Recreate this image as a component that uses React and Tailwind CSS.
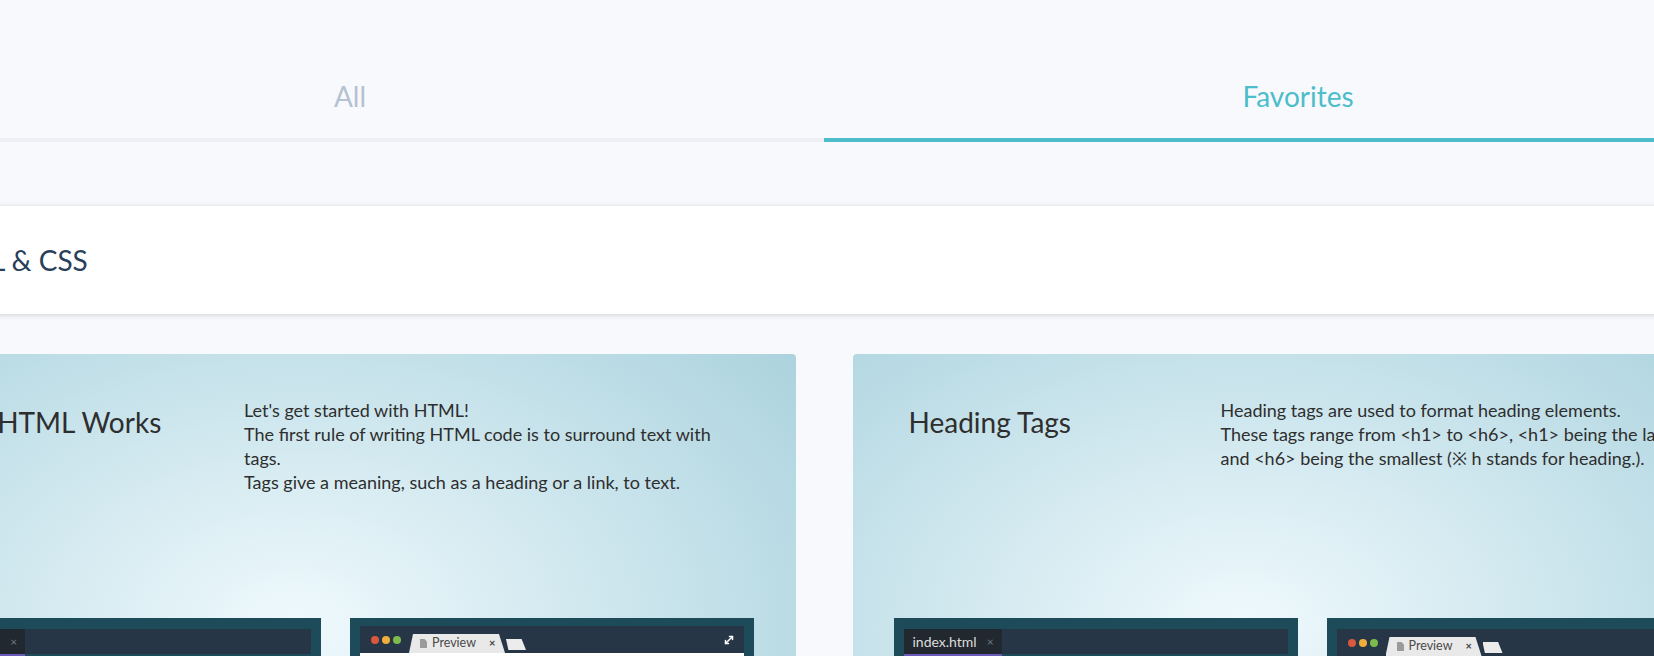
import { MoveDiagonal } from "lucide-react";

const lessons = [
  {
    title: "How HTML Works",
    body: [
      "Let's get started with HTML!",
      "The first rule of writing HTML code is to surround text with tags.",
      "Tags give a meaning, such as a heading or a link, to text.",
    ],
    editorTab: false,
  },
  {
    title: "Heading Tags",
    body: [
      "Heading tags are used to format heading elements.",
      "These tags range from <h1> to <h6>, <h1> being the largest and <h6> being the smallest (※ h stands for heading.).",
    ],
    editorTab: true,
  },
];

function EditorPanel() {
  return (
    <div className="h-[300px] w-[404px] shrink-0 bg-[#1d4b5a] px-[10px] pt-[11px]">
      <div className="flex h-[25px] bg-[#263646]">
        <div className="flex w-[98px] items-center gap-[10px] bg-[#22282f] pl-[9px] text-[14px] text-[#dcdcdc]">
          <span>index.html</span>
          <span className="text-[12px] text-[#6b7683]">×</span>
        </div>
      </div>
      <div className="flex">
        <div className="h-[2px] w-[98px] bg-[#6a5bb8]" />
      </div>
      <div className="h-[240px] bg-[#263646]" />
    </div>
  );
}

function PreviewPanel({ top }) {
  return (
    <div className={`h-[300px] w-[404px] shrink-0 bg-[#1d4b5a] px-[10px] ${top}`}>
      <div className="flex h-[27px] items-start bg-[#263646]">
        <div className="flex gap-[3px] pl-[11px] pt-[10px]">
          <span className="h-2 w-2 rounded-full bg-[#d9583f]" />
          <span className="h-2 w-2 rounded-full bg-[#efad3b]" />
          <span className="h-2 w-2 rounded-full bg-[#7dba4e]" />
        </div>
        <div className="ml-[8px] mt-[8px] flex h-[19px] w-[96px] items-center bg-[#e9e9e9] pl-[11px] text-[12.5px] text-[#4a4a4a] [clip-path:polygon(4px_0,calc(100%-6px)_0,100%_100%,0_100%)]">
          <svg width="7" height="9" viewBox="0 0 7 9" className="mr-[5px]">
            <path d="M0 0h4.5L7 2.5V9H0z" fill="#9a9a9a" />
          </svg>
          <span>Preview</span>
          <span className="ml-[13px] text-[11px] font-bold text-[#444]">×</span>
        </div>
        <div className="ml-[1px] mt-[13px] h-[11px] w-[20px] bg-[#ececec] [clip-path:polygon(0_0,78%_0,100%_100%,12%_100%)]" />
        <div className="ml-auto pr-[9px] pt-[8px] text-white">
          <MoveDiagonal size={12} strokeWidth={3} />
        </div>
      </div>
      <div className="h-[240px] bg-white" />
    </div>
  );
}

function LessonCard({ lesson, glow }) {
  return (
    <div
      className={`h-[420px] overflow-hidden rounded-[4px] px-[41px] pt-[44px] ${glow}`}
    >
      <div className="flex h-[220px] items-start px-[15px]">
        <h2 className="mt-[7px] w-[312px] shrink-0 text-[28px] leading-[34px] text-[#2e2e2e]">
          {lesson.title}
        </h2>
        <div className="w-[490px] text-[18px] leading-[24px] text-[#2e2e2e]">
          {lesson.body.map((line) => (
            <p key={line}>{line}</p>
          ))}
        </div>
      </div>
      <div className="flex gap-[29px]">
        <EditorPanel />
        <PreviewPanel top={lesson.editorTab ? "pt-[11px]" : "pt-[8px]"} />
      </div>
    </div>
  );
}

export default function App() {
  return (
    <div className="h-[656px] overflow-hidden bg-[#f7f9fc] font-['Lato',sans-serif]">
      <div className="-ml-[124px] w-[1896px]">
        <div className="flex">
          <button className="flex h-[142px] flex-1 items-center justify-center border-b-4 border-[#eef0f5] pt-[54px] text-[28px] text-[#b5c1d1]">
            All
          </button>
          <button className="flex h-[142px] flex-1 items-center justify-center border-b-4 border-[#4dbdcc] pt-[54px] text-[28px] text-[#4dbdcc]">
            Favorites
          </button>
        </div>

        <div className="mt-[64px] flex h-[108px] items-center bg-white pl-[51px] shadow-[0_1px_6px_rgba(0,0,0,0.16)]">
          <h1 className="text-[28px] text-[#28405a]">HTML &amp; CSS</h1>
        </div>

        <div className="mt-[40px] grid grid-cols-2 gap-[57px]">
          <LessonCard
            lesson={lessons[0]}
            glow="bg-[radial-gradient(ellipse_660px_440px_at_420px_270px,#eff9fd,#aad2dd)]"
          />
          <LessonCard
            lesson={lessons[1]}
            glow="bg-[radial-gradient(ellipse_660px_440px_at_390px_270px,#eff9fd,#aad2dd)]"
          />
        </div>
      </div>
    </div>
  );
}
